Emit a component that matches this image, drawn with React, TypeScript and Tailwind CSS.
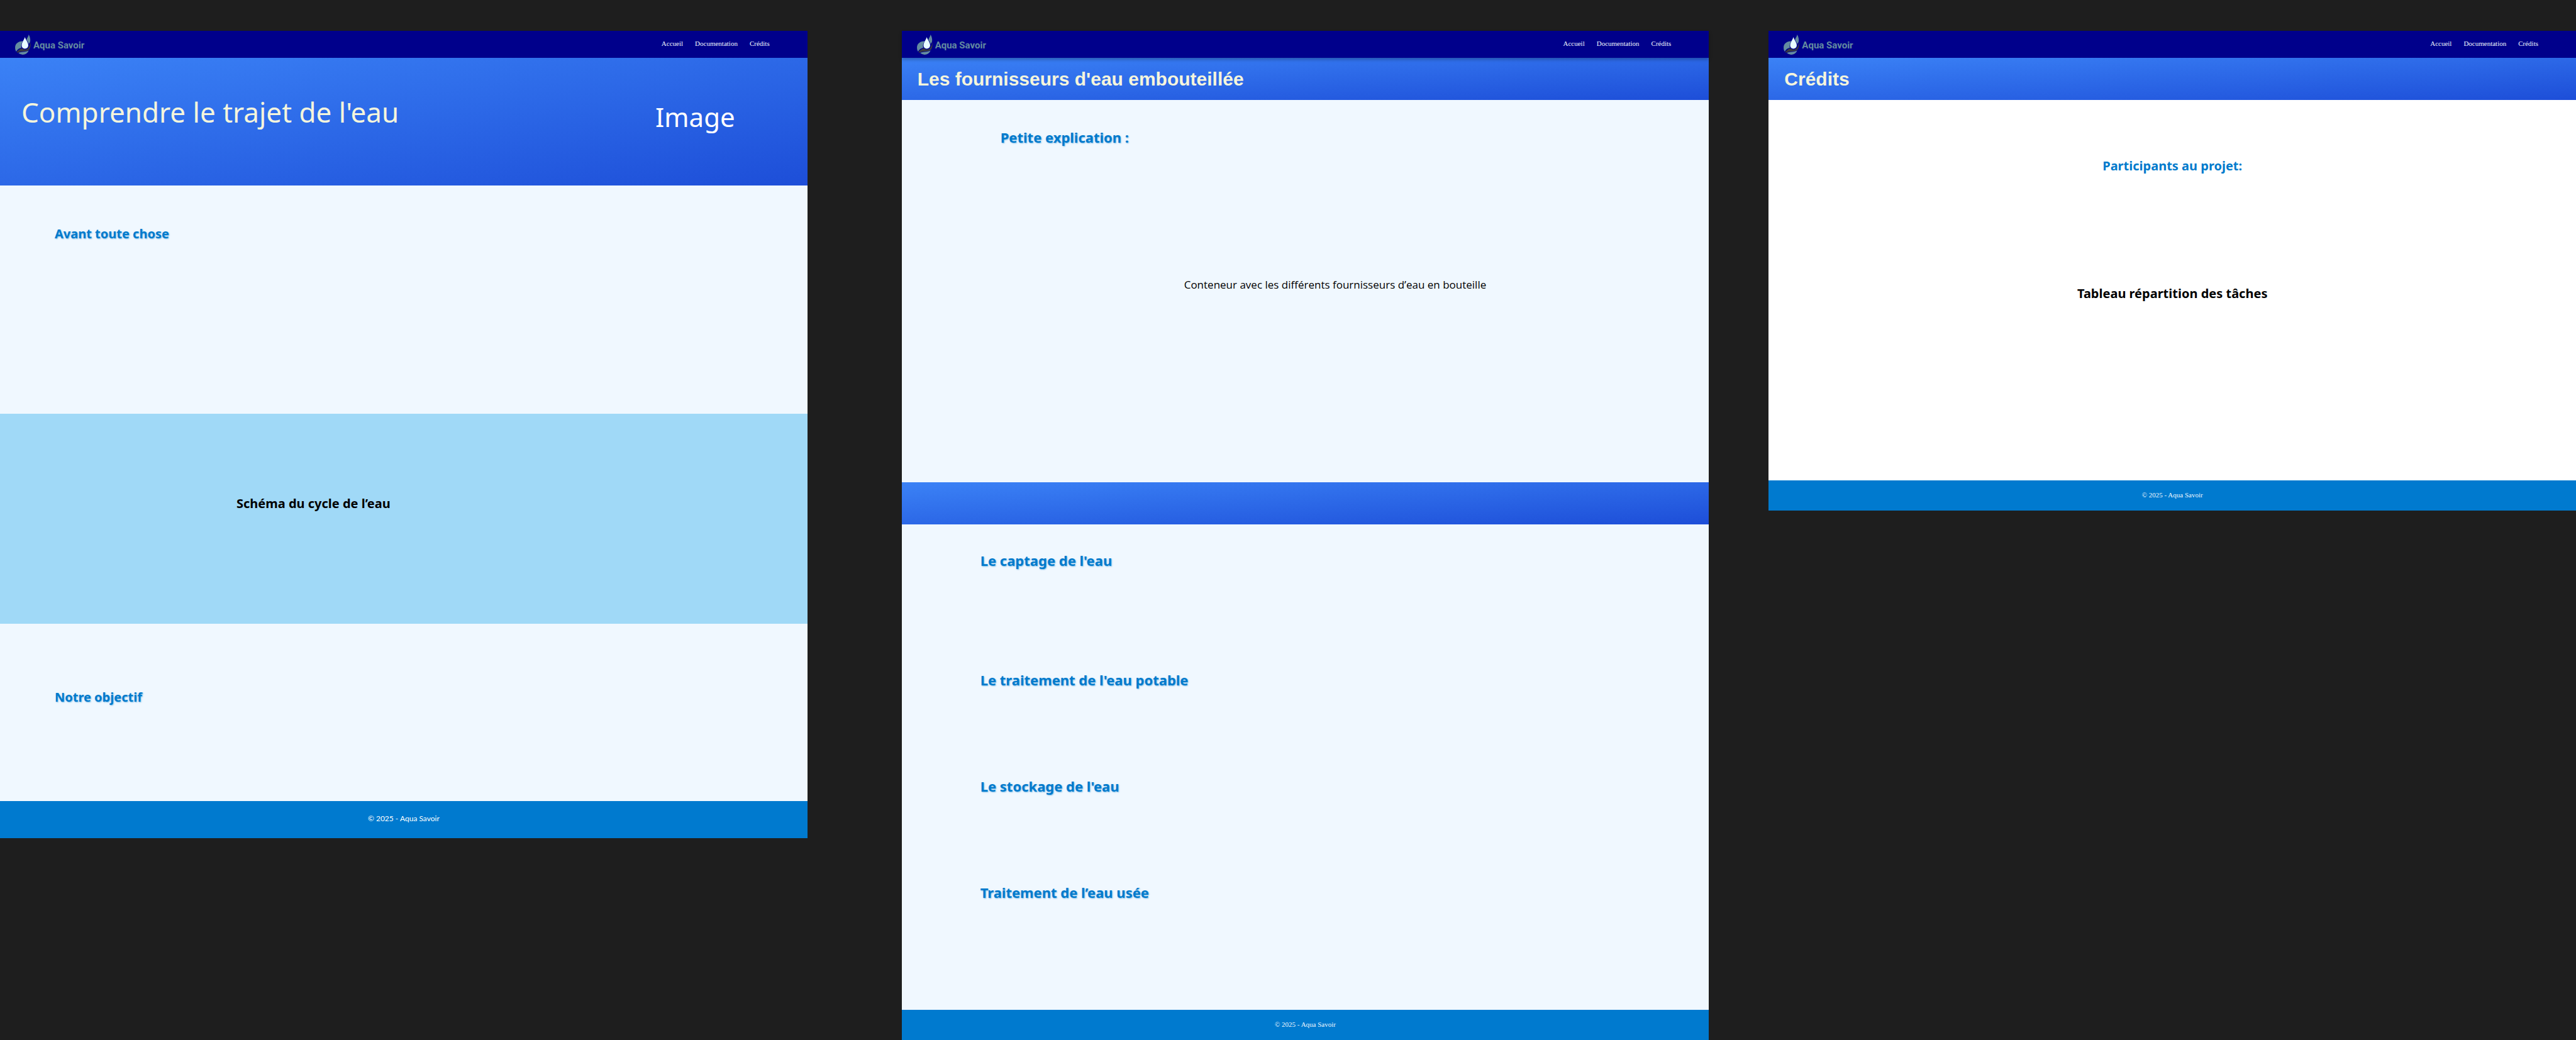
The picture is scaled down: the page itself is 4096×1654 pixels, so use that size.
import type { ReactNode } from "react";

function Logo() {
  return (
    <a href="#accueil" className="flex items-center gap-1 text-[#648ca0]">
      <svg viewBox="108 66 112 144" className="h-8 w-[25px]" aria-hidden="true">
        <g fill="currentColor">
          <path d="M163 113C130 112 108 132 108 158C108 170 111 180 116 187C122 174 136 163 153 159C148 146 152 131 163 113Z" />
          <path d="M205 66C216 84 219 104 215 119C212 126 208 130 204 132C202 122 196 112 190 104C193 88 202 84 205 66Z" />
          <path d="M131 197C150 189 182 193 205 180C198 200 180 210 162 210C150 209 140 205 131 197Z" />
        </g>
        <path
          d="M178 84C172 105 155 122 155 143C155 158 165 167 178 167C191 167 202 158 202 143C202 122 184 105 178 84Z"
          fill="#e8fdff"
        />
        <path
          d="M218 120C221 150 215 170 200 180C180 190 150 183 122 196C119 190 124 183 135 176C147 167 156 163 163 167C173 176 190 175 200 165C212 151 216 136 218 120Z"
          fill="#3a3a3f"
        />
      </svg>
      <span className="pt-[2px] font-['Roboto',sans-serif] text-[15px] leading-5 font-bold">Aqua Savoir</span>
    </a>
  );
}

function Header({ shadow = false }: { shadow?: boolean }) {
  return (
    <header
      className={
        shadow
          ? "relative flex h-[43px] items-center justify-between bg-[#00008b] pr-[60px] pl-6 shadow-[0_3px_5px_rgba(0,0,0,0.25)]"
          : "flex h-[43px] items-center justify-between bg-[#00008b] pr-[60px] pl-6"
      }
    >
      <Logo />
      <nav className="flex gap-[19px] pb-1 font-['Liberation_Serif',serif] text-[11px] leading-4 text-[#f0f8ff]">
        <a href="#accueil">Accueil</a>
        <a href="#documentation">Documentation</a>
        <a href="#credits">Crédits</a>
      </nav>
    </header>
  );
}

function TitleBand({ children }: { children?: ReactNode }) {
  return (
    <div className="h-[67px] bg-linear-to-br/srgb from-[#3b82f6] to-[#1d4ed8] px-[25px] pt-[14px]">
      {children && (
        <h1 className="font-['Liberation_Sans',sans-serif] text-[30px] leading-10 font-bold text-[#f5f5dc]">
          {children}
        </h1>
      )}
    </div>
  );
}

function Heading({ children }: { children: ReactNode }) {
  return (
    <h2 className="text-xl leading-8 font-bold text-[#007acc] [text-shadow:1px_1px_2px_rgba(0,122,204,0.5)]">
      {children}
    </h2>
  );
}

function LargeHeading({ children }: { children: ReactNode }) {
  return (
    <h2 className="text-[22px] leading-8 font-bold text-[#007acc] [text-shadow:1px_1px_2px_rgba(0,122,204,0.5)]">
      {children}
    </h2>
  );
}

function Footer() {
  return (
    <footer className="flex h-12 items-center justify-center bg-[#007acf] pb-[2px] font-['Liberation_Serif',serif] text-[11px] leading-4 text-[#f0f8ff]">
      © 2025 - Aqua Savoir
    </footer>
  );
}

function HomePage() {
  return (
    <article className="min-w-0 flex-1 bg-[#f0f8ff]">
      <Header />
      <div className="flex items-start justify-between bg-linear-to-br/srgb from-[#3b82f6] to-[#1d4ed8] pt-[54px] pr-[115px] pb-[77px] pl-[34px]">
        <h1 className="text-[44px] leading-[64px] text-[#f5f5dc]">Comprendre le trajet de l'eau</h1>
        <p className="mt-2 text-[42px] leading-[64px] text-white">Image</p>
      </div>
      <section className="pt-[61px] pb-[270px] pl-[87px]">
        <Heading>Avant toute chose</Heading>
      </section>
      <section className="bg-[#a0d9f7] pt-[127px] pb-[175px] pl-[376px]">
        <h2 className="text-xl leading-8 font-bold text-black">Schéma du cycle de l’eau</h2>
      </section>
      <section className="pt-[101px] pb-[149px] pl-[87px]">
        <Heading>Notre objectif</Heading>
      </section>
      <footer className="flex h-[59px] items-center justify-center bg-[#007acf] pb-1 font-['Lato',sans-serif] text-xs leading-5 text-white">
        © 2025 - Aqua Savoir
      </footer>
    </article>
  );
}

function DocumentationPage() {
  return (
    <article className="ml-[150px] min-w-0 flex-1 bg-[#f0f8ff]">
      <Header shadow />
      <TitleBand>Les fournisseurs d'eau embouteillée</TitleBand>
      <section className="pt-[43px] pb-[302px]">
        <div className="pl-[157px]">
          <LargeHeading>Petite explication :</LargeHeading>
        </div>
        <p className="mt-[207px] pl-[449px] font-['Open_Sans',sans-serif] text-[17px] leading-6 text-black">
          Conteneur avec les différents fournisseurs d’eau en bouteille
        </p>
      </section>
      <TitleBand />
      <section className="pt-[41px] pb-[171px] pl-[125px]">
        <LargeHeading>Le captage de l'eau</LargeHeading>
        <div className="mt-[158px] flex flex-col gap-[137px]">
          <LargeHeading>Le traitement de l'eau potable</LargeHeading>
          <LargeHeading>Le stockage de l'eau</LargeHeading>
          <LargeHeading>Traitement de l’eau usée</LargeHeading>
        </div>
      </section>
      <Footer />
    </article>
  );
}

function CreditsPage() {
  return (
    <article className="ml-[95px] min-w-0 flex-1 bg-white">
      <Header />
      <TitleBand>Crédits</TitleBand>
      <section className="flex flex-col items-center gap-[171px] pt-[89px] pb-[281px] text-xl leading-8 font-bold">
        <h2 className="text-[#007acc]">Participants au projet:</h2>
        <h2 className="text-black">Tableau répartition des tâches</h2>
      </section>
      <Footer />
    </article>
  );
}

export default function App() {
  return (
    <main className="flex min-h-screen items-start bg-[#1e1e1e] pt-[49px] font-['Noto_Sans',sans-serif]">
      <HomePage />
      <DocumentationPage />
      <CreditsPage />
    </main>
  );
}
